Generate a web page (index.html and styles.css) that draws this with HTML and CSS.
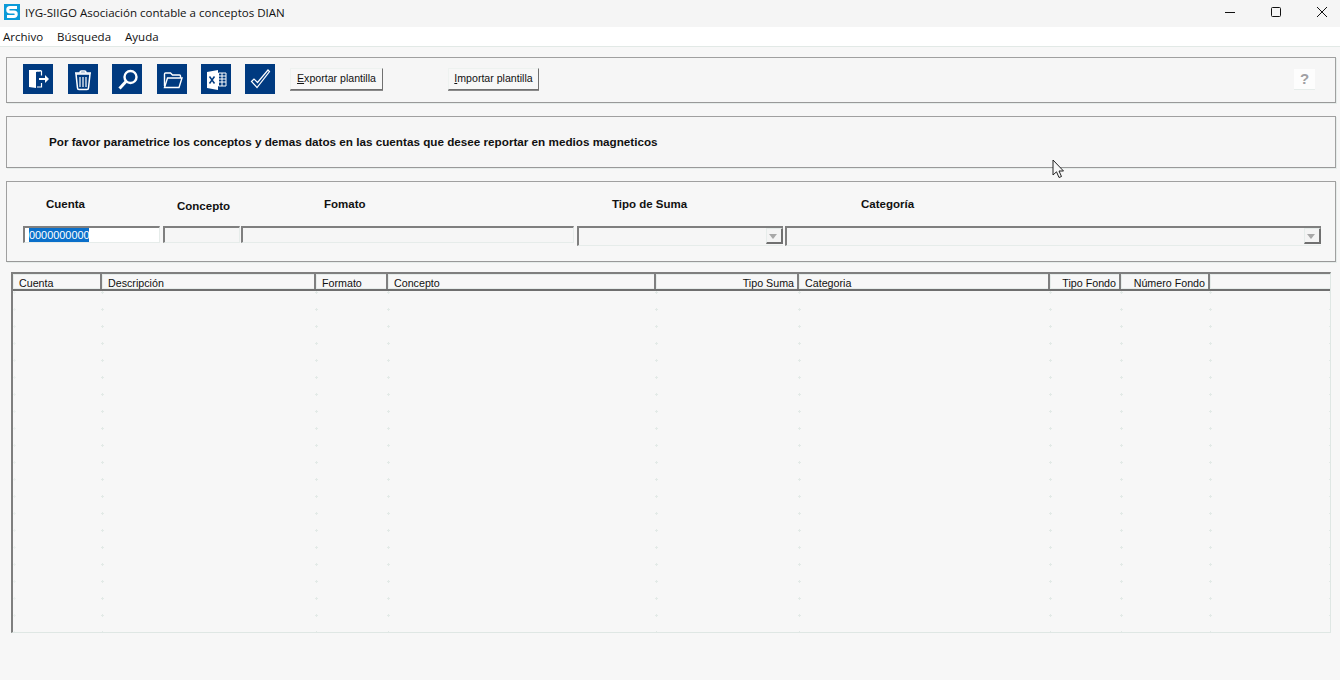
FILE: index.html
```html
<!DOCTYPE html>
<html lang="es">
<head>
    <meta charset="UTF-8">
    <title>IYG-SIIGO Asociación contable a conceptos DIAN</title>
    <link rel="stylesheet" href="styles.css">
</head>
<body>
    <header class="titlebar">
        <svg class="app-icon" width="16" height="16" viewBox="0 0 16 16">
            <rect width="16" height="16" fill="#0a9ad8"/>
            <path d="M13 3.500H6a2.200 2.200 0 0 0 0 4.500h4a2.200 2.200 0 0 1 0 4.500H3" fill="none" stroke="#fff" stroke-width="3"/>
        </svg>
        <span class="title">IYG-SIIGO Asociación contable a conceptos DIAN</span>
        <div class="win-controls">
            <svg width="12" height="12" viewBox="0 0 12 12"><path d="M1 6.500h10" stroke="#111" fill="none"/></svg>
            <svg width="12" height="12" viewBox="0 0 12 12"><rect x="1.500" y="1.500" width="9" height="9" rx="1" stroke="#111" fill="none"/></svg>
            <svg width="12" height="12" viewBox="0 0 12 12"><path d="M1 1l10 10M11 1L1 11" stroke="#111" fill="none"/></svg>
        </div>
    </header>

    <nav class="menubar">
        <span>Archivo</span>
        <span>Búsqueda</span>
        <span>Ayuda</span>
    </nav>

    <main class="content">
        <section class="panel toolbar">
            <button class="tool wide">
                <svg viewBox="0 0 30 30" width="30" height="30">
                    <path d="M6 6h12v1l-5 1v16l-7-1z" fill="#fff"/>
                    <path d="M15 7h3.500v4.500M18.500 19v4H14" fill="none" stroke="#fff" stroke-width="1.200"/>
                    <path d="M16 14h6v-3l4 4-4 4v-3h-6z" fill="#fff"/>
                </svg>
            </button>
            <button class="tool">
                <svg viewBox="0 0 30 30" width="30" height="30" fill="none" stroke="#fff">
                    <path d="M8 10h14l-1.500 14q0 1.500-1.500 1.500h-8q-1.500 0-1.500-1.500z" stroke-width="1.500"/>
                    <path d="M7 9h16M12 8.500q0-1.500 1.500-1.500h3q1.500 0 1.500 1.500" stroke-width="1.500"/>
                    <path d="M12 13v10M15 13v10M18 13v10" stroke-width="1.200"/>
                </svg>
            </button>
            <button class="tool wide">
                <svg viewBox="0 0 30 30" width="30" height="30" fill="none" stroke="#fff">
                    <circle cx="18.500" cy="13" r="6" stroke-width="2.400"/>
                    <path d="M14 17.500L7.500 24.500" stroke-width="3"/>
                </svg>
            </button>
            <button class="tool">
                <svg viewBox="0 0 30 30" width="30" height="30" fill="none" stroke="#fff" stroke-width="1.400">
                    <path d="M7.500 22V10q0-1 1-1h5l2 2h7q1 0 1 1v2"/>
                    <path d="M7.500 23.500l3-9.500h14.500l-3 9.500z"/>
                </svg>
            </button>
            <button class="tool">
                <svg viewBox="0 0 30 30" width="30" height="30">
                    <path d="M6 8l11-2v20l-11-2z" fill="#fff"/>
                    <path d="M17.500 9h7.500v13h-7.500z" fill="none" stroke="#fff"/>
                    <path d="M18 12h7M18 15h7M18 18h7M21 9v13" stroke="#fff" stroke-width="1"/>
                    <path d="M8.500 12.500l5 7M13.500 12.500l-5 7" stroke="#003a80" stroke-width="1.500"/>
                </svg>
            </button>
            <button class="tool">
                <svg viewBox="0 0 30 30" width="30" height="30">
                    <path d="M6.500 17.500l2.500-2.500 3.500 3.500L23 6l1.500 1.500L12 23.500z" fill="none" stroke="#fff" stroke-width="1.200"/>
                </svg>
            </button>
            <button class="btn export-btn"><u>E</u>xportar plantilla</button>
            <button class="btn import-btn"><u>I</u>mportar plantilla</button>
            <span class="help">?</span>
        </section>

        <section class="panel message">
            <p>Por favor parametrice los conceptos y demas datos en las cuentas que desee reportar en medios magneticos</p>
        </section>

        <section class="panel filters">
            <div class="filter-labels">
                <label>Cuenta</label>
                <label class="lbl-concepto">Concepto</label>
                <label>Fomato</label>
                <label>Tipo de Suma</label>
                <label>Categoría</label>
            </div>
            <div class="filter-fields">
                <div class="field field-cuenta white"><span class="selected">0000000000</span></div>
                <div class="field field-concepto"></div>
                <div class="field field-formato"></div>
                <div class="field combo field-tipo"><span class="arrow"></span></div>
                <div class="field combo field-categoria"><span class="arrow"></span></div>
            </div>
        </section>

        <section class="grid">
            <div class="grid-head">
                <div class="th c1">Cuenta</div>
                <div class="th c2">Descripción</div>
                <div class="th c3">Formato</div>
                <div class="th c4">Concepto</div>
                <div class="th c5 right">Tipo Suma</div>
                <div class="th c6">Categoria</div>
                <div class="th c7 right">Tipo Fondo</div>
                <div class="th c8 right">Número Fondo</div>
                <div class="th c9"></div>
            </div>
            <div class="grid-body">
                <div class="col c1"></div>
                <div class="col c2"></div>
                <div class="col c3"></div>
                <div class="col c4"></div>
                <div class="col c5"></div>
                <div class="col c6"></div>
                <div class="col c7"></div>
                <div class="col c8"></div>
                <div class="col c9"></div>
            </div>
        </section>
    </main>

    <svg class="cursor" width="13" height="20" viewBox="0 0 13 20">
        <path d="M1 1v15l3.500-3.200 2.500 5.700 2.500-1-2.500-5.500h4.500z" fill="#f7f7f7" stroke="#222" stroke-width="1"/>
    </svg>
</body>
</html>
```

FILE: styles.css
```css
* {
    box-sizing: border-box;
}

body {
    margin: 0;
    height: 680px;
    overflow: hidden;
    background: #f7f7f7;
    font-family: "Liberation Sans", Arial, sans-serif;
    color: #111;
}

.titlebar {
    height: 27px;
    display: flex;
    align-items: center;
    background: #f5f5f5;
    padding: 0 0 3px 4px;
}

.title {
    margin-left: 5px;
    font-family: "Open Sans", sans-serif;
    font-size: 11.550px;
}

.win-controls {
    margin-left: auto;
    display: flex;
    gap: 34px;
    padding-right: 12px;
}

.menubar {
    height: 20px;
    display: flex;
    align-items: center;
    gap: 14px;
    padding-left: 3px;
    background: #fff;
    border-bottom: 1px solid #e2e9e6;
    font-family: "Open Sans", sans-serif;
    font-size: 11.500px;
}

.content {
    padding: 10px 4px 0 6px;
}

.panel {
    border: 1px solid #a0a0a0;
    border-bottom-color: #999;
    background: #f6f6f6;
    box-shadow: 1px 1px 0 #e6ecea;
}

.toolbar {
    height: 46px;
    display: flex;
    align-items: center;
    padding-left: 16px;
    padding-bottom: 2px;
}

.tool {
    width: 30px;
    height: 30px;
    padding: 0;
    margin-right: 14px;
    border: 0;
    background: #003a80;
    display: block;
}

.tool.wide {
    margin-right: 15px;
}

.tool svg {
    display: block;
}

.btn {
    height: 22px;
    padding: 0 0 2px;
    background: #f7f7f7;
    border: 1px solid;
    border-color: #eef2f0 #707070 #707070 #eef2f0;
    box-shadow: 0 1px 0 #8a8a8a;
    font-family: "Liberation Sans", sans-serif;
    font-size: 10.600px;
    color: #111;
}

.export-btn {
    width: 93px;
    margin-left: 1px;
}

.import-btn {
    width: 91px;
    margin-left: 65px;
}

.help {
    margin-left: auto;
    margin-right: 20px;
    width: 21px;
    height: 21px;
    background: #fdfdfd;
    border-bottom: 1px solid #e6ecea;
    color: #a0a0a4;
    font-size: 15px;
    font-weight: bold;
    text-align: center;
    line-height: 20px;
}

.message {
    height: 52px;
    margin-top: 13px;
    display: flex;
    align-items: center;
    padding: 0 0 2px 42px;
}

.message p {
    margin: 0;
    font-size: 11.700px;
    font-weight: bold;
}

.filters {
    height: 81px;
    margin-top: 13px;
    background: #f7f7f7;
}

.filter-labels {
    height: 44px;
    display: grid;
    grid-template-columns: 131px 147px 288px 249px 1fr;
    padding: 16px 0 0 39px;
    font-size: 11.500px;
    font-weight: bold;
}

.lbl-concepto {
    padding-top: 2px;
}

.filter-fields {
    display: flex;
    padding-left: 16px;
}

.field {
    height: 17px;
    border: 1px solid;
    border-top: 2px solid #7f7f7f;
    border-left: 2px solid #7f7f7f;
    border-right-color: #e6ecea;
    border-bottom-color: #e6ecea;
    background: #f6f6f6;
}

.white {
    background: #fff;
}

.selected {
    display: block;
    width: 60px;
    height: 14px;
    margin-left: 4px;
    background: #0a6fca;
    color: #fff;
    font-size: 10.900px;
    line-height: 14px;
}

.combo {
    height: 20px;
    display: flex;
    justify-content: flex-end;
    align-items: flex-start;
    border-right: 0;
}

.arrow {
    width: 17px;
    height: 16px;
    background: #f4f4f4;
    border: 1px solid;
    border-color: #e6ecea #707070 #707070 #e6ecea;
    border-width: 1px 2px 2px 1px;
    position: relative;
}

.arrow::after {
    content: "";
    position: absolute;
    left: 2px;
    top: 5px;
    border: 4px solid transparent;
    border-top: 5px solid #a8a8a8;
    border-bottom: 0;
}

.field-cuenta { width: 137px; margin-right: 3px; }
.field-concepto { width: 77px; margin-right: 1px; }
.field-formato { width: 333px; margin-right: 3px; }
.field-tipo { width: 206px; margin-right: 2px; }
.field-categoria { width: 536px; }

.grid {
    width: 1320px;
    height: 361px;
    margin-top: 10px;
    margin-left: 5px;
    display: flex;
    flex-direction: column;
    border-top: 2px solid #7f7f7f;
    border-left: 2px solid #7f7f7f;
    border-right: 1px solid #dfe7e4;
    border-bottom: 1px solid #dfe7e4;
}

.grid-head {
    height: 17px;
    display: flex;
    border-bottom: 2px solid #6f6f6f;
    font-size: 10.700px;
}

.th {
    height: 15px;
    padding: 2px 0 0 6px;
    line-height: 14px;
    border-right: 2px solid #7f7f7f;
    white-space: nowrap;
    box-shadow: inset 1px 1px 0 #e6ecea, inset 0 -1px 0 #e6ecea;
}

.th.right {
    text-align: right;
    padding: 2px 3px 0 0;
}

.c1 { width: 89px; }
.c2 { width: 214px; }
.c3 { width: 72px; }
.c4 { width: 268px; }
.c5 { width: 143px; }
.c6 { width: 251px; }
.c7 { width: 71px; }
.c8 { width: 89px; }
.c9 { flex: 1; border-right: 0; }

.grid-body {
    flex: 1;
    display: flex;
}

.col {
    height: 100%;
    position: relative;
}

/* little marks the old grid control leaves on each row line */
.col::before {
    content: "";
    position: absolute;
    top: 0;
    bottom: 0;
    left: -1px;
    width: 3px;
    background-image:
        repeating-linear-gradient(to bottom, transparent 0, transparent 1px, #e3eae7 1px, #e3eae7 2px, transparent 2px, transparent 17px),
        repeating-linear-gradient(to bottom, #e3eae7 0, #e3eae7 3px, transparent 3px, transparent 17px);
    background-size: 100% 100%, 1px 100%;
    background-position: 0 0, 1px 0;
    background-repeat: no-repeat;
}

.col.c1::before {
    left: 0;
    opacity: 0.5;
}

.col.c9::after {
    content: "";
    position: absolute;
    top: 1px;
    bottom: 0;
    right: 0;
    width: 1px;
    background-image: repeating-linear-gradient(to bottom, #e3eae7 0, #e3eae7 1px, transparent 1px, transparent 17px);
}

.cursor {
    position: absolute;
    left: 1052px;
    top: 159px;
}
```
